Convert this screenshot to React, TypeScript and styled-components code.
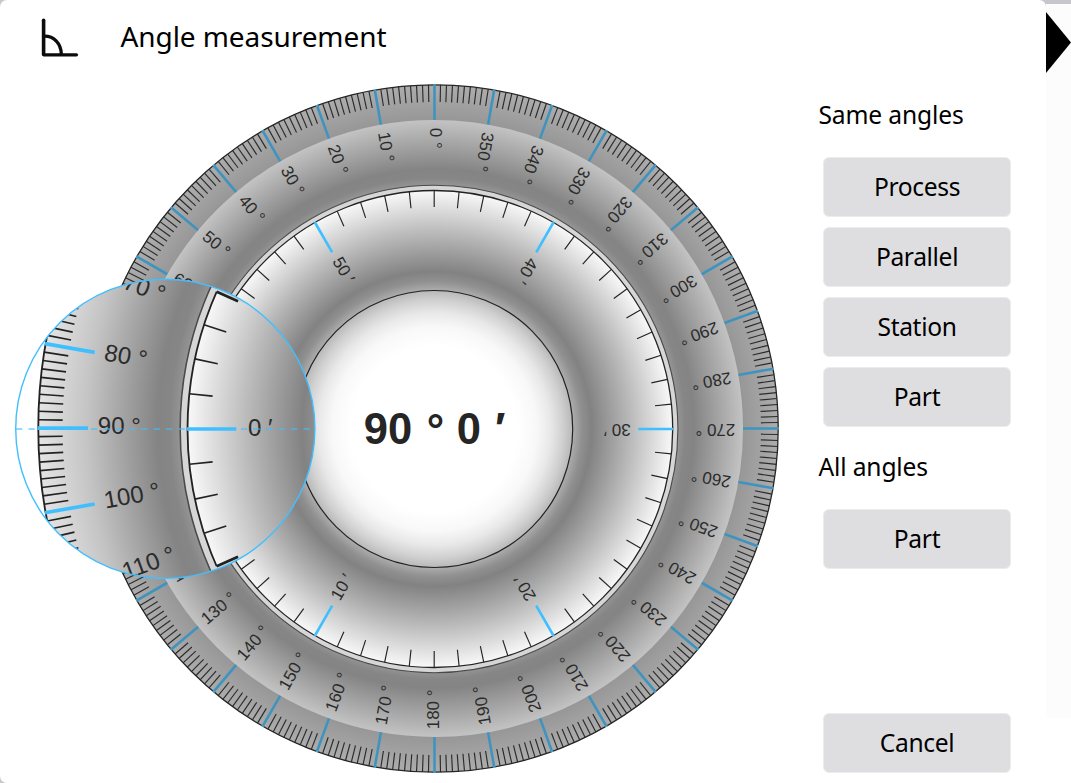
import React from "react";
import styled, { createGlobalStyle } from "styled-components";

const GlobalStyle = createGlobalStyle`
  * { box-sizing: border-box; }
  html, body, #root { height: 100%; }
  body {
    margin: 0;
    overflow: hidden;
    background: #c9c9cd;
    color: #000;
    font-family: "Noto Sans", sans-serif;
  }
`;

const Screen = styled.div`
  display: flex;
  width: 1071px;
  height: 783px;
`;

const Dialog = styled.main`
  display: flex;
  width: 1046px;
  height: 783px;
  background: #fff;
  border-radius: 7px 7px 0 7px;
`;

const Workspace = styled.section`
  display: flex;
  flex-direction: column;
  width: 818px;
`;

const Header = styled.header`
  display: flex;
  align-items: center;
  height: 74px;
  padding-left: 40px;
`;

const HeaderIcon = styled.svg`
  width: 40px;
  height: 40px;
  margin-top: 2px;
`;

const Title = styled.h1`
  margin: 0 0 2px 40.5px;
  font-size: 28px;
  font-weight: 400;
  line-height: 38px;
  letter-spacing: -0.08px;
  white-space: nowrap;
`;

const DialSvg = styled.svg`
  display: block;
  width: 800px;
  height: 709px;
  font-family: "Liberation Sans", Arial, sans-serif;
`;

const Sidebar = styled.aside`
  display: flex;
  flex-direction: column;
  width: 200px;
  padding: 98px 0 11px;
`;

const GroupTitle = styled.h2`
  margin: 0 0 0 0.5px;
  font-size: 24.6px;
  font-weight: 400;
  line-height: 34px;
  letter-spacing: -0.15px;
  white-space: nowrap;
`;

const ButtonGroup = styled.div`
  display: flex;
  flex-direction: column;
  gap: 11px;
  padding: 25px 0 0 5px;
  margin-bottom: 24px;
`;

const ActionButton = styled.button`
  width: 188px;
  height: 60px;
  margin-bottom: -1px;
  padding: 0 0 2px;
  border: 1px solid #ececee;
  border-radius: 6px;
  background: #dedee0;
  color: #000;
  font: 400 24.6px "Noto Sans", sans-serif;
  letter-spacing: -0.35px;
`;

const Footer = styled.div`
  margin-top: auto;
  padding-left: 5px;
`;

const Edge = styled.div`
  width: 25px;
  height: 783px;
  border-top: 4px solid #c6c6cc;
  background: linear-gradient(#fcfcfc 714px, #fff 714px);
`;

const Arrow = styled.svg`
  display: block;
  width: 25px;
  height: 62px;
  margin-top: 8px;
`;

const INK = "#222";
const LABEL = "#2b2b2b";
const BLUE = "#40bfff";

const OUTER_R = 343.7;
const GAP_R = 243.7;
const INNER_R = 238.5;
const HUB_R = 138.5;

type ScaleProps = {
  /** Limits the drawn labels to a range of degrees or minutes. */
  showLabel?: (value: number) => boolean;
  labelRadius?: number;
};

const all = () => true;
const ring = (count: number) => Array.from({ length: count }, (_, i) => i);

/* Degree scale: the angle grows counter-clockwise from the top. */
function DegreeScale({ showLabel = all, labelRadius = 300.8 }: ScaleProps) {
  return (
    <g>
      <circle r={OUTER_R} fill="url(#degreeFill)" stroke={INK} strokeWidth={1.3} />
      {ring(360).filter((d) => d % 10 !== 0).map((d) => (
        <line key={d} y1={-OUTER_R} y2={-326.5} stroke={INK} strokeWidth={1.15} transform={`rotate(${-d})`} />
      ))}
      {ring(36).map((i) => (
        <g key={i} transform={`rotate(${-i * 10})`}>
          <line y1={-OUTER_R - 0.5} y2={-308.5} stroke={BLUE} strokeWidth={2.6} />
          {showLabel(i * 10) && (
            <text transform={`translate(0 ${-labelRadius}) rotate(90)`} y={4.4} fontSize={17} fill={LABEL}>
              {`${i * 10} °`}
            </text>
          )}
        </g>
      ))}
    </g>
  );
}

/* Minute scale: zero lies on the left, and minutes grow counter-clockwise. */
function MinuteScale({ showLabel = all, labelRadius = 196.5 }: ScaleProps) {
  return (
    <g>
      <circle r={INNER_R} fill="url(#minuteFill)" stroke={INK} strokeWidth={1.3} />
      {ring(60).map((m) => (
        <g key={m} transform={`rotate(${-90 - m * 6})`}>
          {m % 10 === 0 ? (
            <>
              <line y1={-INNER_R - 0.5} y2={-204} stroke={BLUE} strokeWidth={2.6} />
              {showLabel(m) && (
                <text transform={`translate(0 ${-labelRadius}) rotate(90)`} y={4.6} fontSize={17} fill={LABEL}>
                  {`${m} ′`}
                </text>
              )}
            </>
          ) : (
            <line y1={-INNER_R} y2={-222} stroke={INK} strokeWidth={1.15} />
          )}
        </g>
      ))}
    </g>
  );
}

function GapRing() {
  return <circle r={GAP_R} fill="#d6d6d6" stroke="#4a4a4a" strokeWidth={1.1} />;
}

function Magnifier() {
  const scale = 1.415;
  return (
    <g>
      <circle cx={165.3} cy={428.8} r={149.6} fill="#fff" />
      <g clipPath="url(#lensClip)">
        <g transform={`translate(524.6 428.2) scale(${scale})`}>
          <DegreeScale showLabel={(d) => d >= 70 && d <= 110} labelRadius={301.6} />
        </g>
        <g transform={`translate(525 429) scale(${scale})`}>
          <GapRing />
          <g clipPath="url(#wedgeClip)">
            <MinuteScale showLabel={(m) => m === 0} labelRadius={195.8} />
          </g>
          {[-24, 24].map((a) => (
            <line key={a} x1={-INNER_R} x2={-222} stroke={INK} strokeWidth={1.8} transform={`rotate(${a})`} />
          ))}
        </g>
      </g>
      <line x1={16} x2={315} y1={429} y2={429} stroke={BLUE} strokeWidth={1.6} strokeDasharray="6.3 6.2" opacity={0.75} />
      <circle cx={165.3} cy={428.8} r={149.6} fill="none" stroke={BLUE} strokeWidth={1.4} />
    </g>
  );
}

function Protractor() {
  return (
    <DialSvg viewBox="0 74 800 709">
      <defs>
        <radialGradient id="degreeFill" gradientUnits="userSpaceOnUse" cx={0} cy={0} r={OUTER_R}>
          <stop offset={0.7} stopColor="#9a9a9a" />
          <stop offset={0.73} stopColor="#868686" />
          <stop offset={0.755} stopColor="#848484" />
          <stop offset={0.9} stopColor="#c4c4c4" />
          <stop offset={1} stopColor="#e4e4e4" />
        </radialGradient>
        <radialGradient id="minuteFill" gradientUnits="userSpaceOnUse" cx={0} cy={0} r={INNER_R}>
          <stop offset={0.57} stopColor="#b4b4b4" />
          <stop offset={0.62} stopColor="#909090" />
          <stop offset={0.66} stopColor="#828282" />
          <stop offset={0.83} stopColor="#bcbcbc" />
          <stop offset={1} stopColor="#f8f8f8" />
        </radialGradient>
        <radialGradient id="hubFill" gradientUnits="userSpaceOnUse" cx={0} cy={0} r={HUB_R}>
          <stop offset={0.6} stopColor="#fff" />
          <stop offset={0.74} stopColor="#f8f8f8" />
          <stop offset={0.84} stopColor="#e8e8e8" />
          <stop offset={0.93} stopColor="#d0d0d0" />
          <stop offset={1} stopColor="#b8b8b8" />
        </radialGradient>
        <clipPath id="lensClip">
          <circle cx={165.3} cy={428.8} r={149.6} />
        </clipPath>
        <clipPath id="wedgeClip">
          <path d="M0 0L-274 -122V122Z" />
        </clipPath>
      </defs>
      <g transform="translate(434.5 428.5)">
        <DegreeScale showLabel={(d) => d <= 60 || d >= 120} />
        <circle r={326.1} fill="none" stroke="#3c3c3c" strokeOpacity={0.33} strokeWidth={35.2} />
      </g>
      <g transform="translate(434.2 429)">
        <GapRing />
        <MinuteScale showLabel={(m) => m !== 0} />
        <circle r={HUB_R} fill="url(#hubFill)" stroke={INK} strokeWidth={1.2} />
        <text x={-70.5} y={14.5} fontSize={43.5} fontWeight={700} fill="#252525">
          90 <tspan dx={2.5} dy={1}>°</tspan> <tspan dx={0.5} dy={-1}>0</tspan> <tspan dx={2}>′</tspan>
        </text>
      </g>
      <Magnifier />
    </DialSvg>
  );
}

export default function App() {
  return (
    <Screen>
      <GlobalStyle />
      <Dialog>
        <Workspace>
          <Header>
            <HeaderIcon viewBox="0 0 40 40" fill="none" stroke="#0c0c0c" strokeLinecap="round">
              <path d="M3.6 2.2V36.5" strokeWidth={3.6} />
              <path d="M4 36.8H36.5" strokeWidth={3.2} />
              <path d="M4.5 18.2C14 18.2 21 25.5 21.3 36" strokeWidth={3.3} />
            </HeaderIcon>
            <Title>Angle measurement</Title>
          </Header>
          <Protractor />
        </Workspace>
        <Sidebar>
          <GroupTitle>Same angles</GroupTitle>
          <ButtonGroup>
            <ActionButton>Process</ActionButton>
            <ActionButton>Parallel</ActionButton>
            <ActionButton>Station</ActionButton>
            <ActionButton>Part</ActionButton>
          </ButtonGroup>
          <GroupTitle>All angles</GroupTitle>
          <ButtonGroup>
            <ActionButton>Part</ActionButton>
          </ButtonGroup>
          <Footer>
            <ActionButton>Cancel</ActionButton>
          </Footer>
        </Sidebar>
      </Dialog>
      <Edge>
        <Arrow viewBox="0 0 25 62">
          <path d="M0 0L25 30.5L0 61Z" fill="#000" />
        </Arrow>
      </Edge>
    </Screen>
  );
}
